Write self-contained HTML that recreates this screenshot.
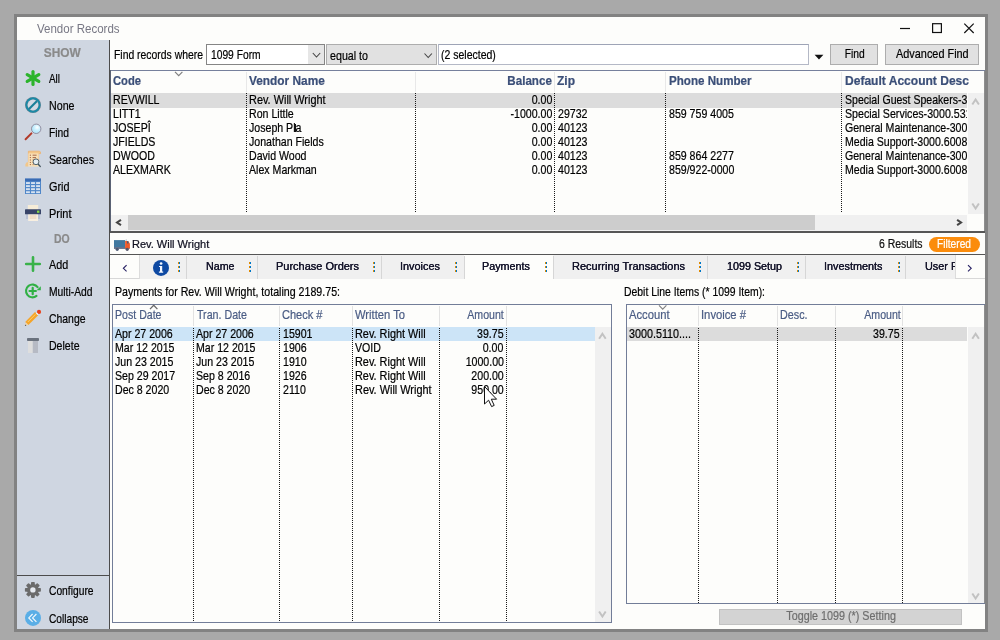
<!DOCTYPE html>
<html><head><meta charset="utf-8"><title>Vendor Records</title>
<style>
html,body{margin:0;padding:0}
body{width:1000px;height:640px;overflow:hidden;position:relative;background:#a9a9a9;font-family:"Liberation Sans",sans-serif;}
#w{position:absolute;left:0;top:0;width:1000px;height:640px;will-change:transform}
.b{position:absolute;display:block}
.t{position:absolute;white-space:nowrap;line-height:1;display:block;-webkit-text-stroke:0.22px currentColor}
.dv{background-image:linear-gradient(to bottom,#1a1a1a 50%,transparent 50%);background-size:1px 2px;}
</style></head><body><div id="w">
<div class="b" style="left:14px;top:14px;width:974px;height:618px;background:#828282;"></div>
<div class="b" style="left:17px;top:17px;width:968px;height:612px;background:#fdfdfb;"></div>
<span class="t" style="left:36.80px;transform-origin:0 0;top:22.00px;font-size:13px;color:#777784;transform:scaleX(0.8861);-webkit-text-stroke:0;">Vendor Records</span>
<svg class="b" style="left:895px;top:18px" width="85" height="20" viewBox="0 0 85 20"><path d="M5 10.5 H15" stroke="#111" stroke-width="1.2"/><rect x="37.6" y="5.7" width="8.8" height="8.8" fill="none" stroke="#111" stroke-width="1.2"/><path d="M69.3 5.6 L78.7 15 M78.7 5.6 L69.3 15" stroke="#111" stroke-width="1.2"/></svg>
<div class="b" style="left:17px;top:40px;width:92px;height:589px;background:#cfd6e1;"></div>
<div class="b" style="left:109px;top:40px;width:1px;height:589px;background:#4c4c4c;"></div>
<div class="b" style="left:17px;top:575px;width:92px;height:1px;background:#4c4c4c;"></div>
<span class="t" style="left:41.98px;transform-origin:50% 0;top:46.00px;font-size:13px;font-weight:700;color:#8a8a8a;transform:scaleX(0.9149);">SHOW</span>
<span class="t" style="left:52.05px;transform-origin:50% 0;top:232.00px;font-size:13px;font-weight:700;color:#8a8a8a;transform:scaleX(0.8051);">DO</span>
<span class="t" style="left:48.60px;transform-origin:0 0;top:72.00px;font-size:13px;color:#000;transform:scaleX(0.7613);">All</span>
<span class="t" style="left:48.60px;transform-origin:0 0;top:99.00px;font-size:13px;color:#000;transform:scaleX(0.8206);">None</span>
<span class="t" style="left:48.60px;transform-origin:0 0;top:126.00px;font-size:13px;color:#000;transform:scaleX(0.7909);">Find</span>
<span class="t" style="left:48.60px;transform-origin:0 0;top:153.00px;font-size:13px;color:#000;transform:scaleX(0.8194);">Searches</span>
<span class="t" style="left:48.60px;transform-origin:0 0;top:180.00px;font-size:13px;color:#000;transform:scaleX(0.8348);">Grid</span>
<span class="t" style="left:48.60px;transform-origin:0 0;top:207.00px;font-size:13px;color:#000;transform:scaleX(0.8418);">Print</span>
<span class="t" style="left:48.60px;transform-origin:0 0;top:258.00px;font-size:13px;color:#000;transform:scaleX(0.8301);">Add</span>
<span class="t" style="left:48.60px;transform-origin:0 0;top:285.00px;font-size:13px;color:#000;transform:scaleX(0.7923);">Multi-Add</span>
<span class="t" style="left:48.60px;transform-origin:0 0;top:312.00px;font-size:13px;color:#000;transform:scaleX(0.8016);">Change</span>
<span class="t" style="left:48.60px;transform-origin:0 0;top:339.00px;font-size:13px;color:#000;transform:scaleX(0.8117);">Delete</span>
<span class="t" style="left:48.60px;transform-origin:0 0;top:584.00px;font-size:13px;color:#000;transform:scaleX(0.7895);">Configure</span>
<span class="t" style="left:48.60px;transform-origin:0 0;top:612.00px;font-size:13px;color:#000;transform:scaleX(0.7809);">Collapse</span>
<svg class="b" style="left:24px;top:69px" width="18" height="18" viewBox="0 0 18 18"><g stroke="#2cb42c" stroke-width="3.2" stroke-linecap="round"><path d="M9 2.6 V15.4"/><path d="M3.2 5.6 L14.8 12.4"/><path d="M14.8 5.6 L3.2 12.4"/></g></svg>
<svg class="b" style="left:24px;top:96px" width="18" height="18" viewBox="0 0 18 18"><circle cx="9" cy="9" r="8" fill="#8f8a94"/><circle cx="9" cy="9" r="6.6" fill="none" stroke="#1b8aa6" stroke-width="2.1"/><circle cx="9" cy="9" r="5.4" fill="#d3dae4"/><path d="M5 13 L13 5" stroke="#1b7f98" stroke-width="2.2"/></svg>
<svg class="b" style="left:24px;top:121px" width="18" height="20" viewBox="0 0 18 20"><defs><radialGradient id="lg" cx="0.6" cy="0.35" r="0.7"><stop offset="0" stop-color="#ffffff"/><stop offset="0.5" stop-color="#c4efff"/><stop offset="1" stop-color="#a8e0f6"/></radialGradient></defs><path d="M1.6 18.2 L7.4 12.4" stroke="#b23a2a" stroke-width="2" stroke-linecap="round"/><circle cx="12.2" cy="7.8" r="4.7" fill="url(#lg)" stroke="#8d8596" stroke-width="0.9"/></svg>
<svg class="b" style="left:24px;top:150px" width="18" height="18" viewBox="0 0 18 18"><path d="M4.4 1.2 H15.2 Q16.8 1.2 16.6 3.6 H14.6 V12 H4.4 Z" fill="#f4c788" stroke="#eeb270" stroke-width="0.8"/><path d="M4.4 12 V16.6 H1.4 Q0.8 14 2.4 12.4 Z" fill="#f2c78a"/><rect x="4.4" y="3.4" width="10.2" height="13.2" fill="#f8e0b6"/><path d="M5.8 5.2 H7 M8.6 5.2 H12.6 M5.8 7.6 H7 M8.6 7.6 H12 M5.8 10 H7 M8.6 10 H10 M5.8 12.4 H7 M8.6 12.4 H9.4 M5.8 14.6 H7 M8.6 14.6 H9.6" stroke="#a86848" stroke-width="1"/><path d="M14 14 L16.2 16.4" stroke="#40525a" stroke-width="1.4" stroke-linecap="round"/><circle cx="12" cy="11.8" r="2.9" fill="#e4eef4" stroke="#4c5e66" stroke-width="0.95"/></svg>
<svg class="b" style="left:24px;top:177px" width="18" height="18" viewBox="0 0 18 18"><rect x="1" y="1.6" width="16" height="15.4" fill="#4f86c8"/><rect x="1" y="1.6" width="16" height="2.6" fill="#3a6cb4"/><rect x="2.00" y="5.10" width="3.9" height="1.9" fill="#d6e2f0"/><rect x="7.05" y="5.10" width="3.9" height="1.9" fill="#d6e2f0"/><rect x="12.10" y="5.10" width="3.9" height="1.9" fill="#d6e2f0"/><rect x="2.00" y="8.15" width="3.9" height="1.9" fill="#d6e2f0"/><rect x="7.05" y="8.15" width="3.9" height="1.9" fill="#d6e2f0"/><rect x="12.10" y="8.15" width="3.9" height="1.9" fill="#d6e2f0"/><rect x="2.00" y="11.20" width="3.9" height="1.9" fill="#d6e2f0"/><rect x="7.05" y="11.20" width="3.9" height="1.9" fill="#d6e2f0"/><rect x="12.10" y="11.20" width="3.9" height="1.9" fill="#d6e2f0"/><rect x="2.00" y="14.25" width="3.9" height="1.9" fill="#d6e2f0"/><rect x="7.05" y="14.25" width="3.9" height="1.9" fill="#d6e2f0"/><rect x="12.10" y="14.25" width="3.9" height="1.9" fill="#d6e2f0"/></svg>
<svg class="b" style="left:24px;top:203px" width="18" height="20" viewBox="0 0 18 20"><rect x="3.8" y="2" width="10.4" height="5" fill="#f6ecd8"/><rect x="2" y="11" width="2.4" height="5" fill="#b8c0d4"/><rect x="13.8" y="11" width="2.4" height="5" fill="#b8c0d4"/><rect x="4.2" y="11" width="9.8" height="7" fill="#f8efe0"/><path d="M5.6 13 H12.4 M5.6 15 H12.4" stroke="#e8c8a8" stroke-width="0.9"/><rect x="1" y="6.3" width="16" height="5" rx="0.6" fill="#384468"/><rect x="13" y="7.6" width="2.4" height="2.2" fill="#86d848"/></svg>
<svg class="b" style="left:24px;top:255px" width="18" height="18" viewBox="0 0 18 18"><path d="M2.2 9 H15.8 M9 2.3 V15.7" stroke="#3ab24a" stroke-width="2.6" stroke-linecap="round"/></svg>
<svg class="b" style="left:24px;top:282px" width="18" height="18" viewBox="0 0 18 18"><path d="M12.5 13.9 A6.4 6.4 0 1 1 13.6 5.2" fill="none" stroke="#30b044" stroke-width="2.1" stroke-linecap="round"/><path d="M16.8 4.2 V8.2 H12.6 Z" fill="#30b044"/><path d="M5.5 9 H11.9 M8.7 5.8 V12.2" stroke="#30b044" stroke-width="2.2" stroke-linecap="round"/></svg>
<svg class="b" style="left:24px;top:309px" width="18" height="18" viewBox="0 0 18 18"><path d="M1.6 14.2 L11.4 4.2 L14.6 7.4 L4.8 17.2 Z" fill="#f5a52a" transform="translate(-0.4,-1.2)"/><path d="M3.8 13 L11.4 5.4" stroke="#fbd070" stroke-width="1"/><path d="M0.9 16.9 L2 13.6 L4.2 15.8 Z" fill="#f2d2a0"/><path d="M0.9 16.9 L1.4 15.5 L2.4 16.4 Z" fill="#303848"/><circle cx="15" cy="2.9" r="2.1" fill="#e8421c"/><path d="M12.4 4 L14 5.6" stroke="#f4f4f4" stroke-width="1.3"/></svg>
<svg class="b" style="left:24px;top:336px" width="18" height="18" viewBox="0 0 18 18"><rect x="4" y="4.6" width="4.8" height="12.4" fill="#dedede"/><rect x="8.8" y="4.6" width="5.2" height="12.4" fill="#b6bac4"/><rect x="3" y="2" width="12" height="3" rx="0.8" fill="#6a727e"/></svg>
<svg class="b" style="left:24px;top:581px" width="18" height="18" viewBox="0 0 18 18"><g transform="translate(8.9,8.9)" fill="#6b6b6b"><rect x="-1.9" y="-8" width="3.8" height="4" rx="0.8" transform="rotate(0)"/><rect x="-1.9" y="-8" width="3.8" height="4" rx="0.8" transform="rotate(45)"/><rect x="-1.9" y="-8" width="3.8" height="4" rx="0.8" transform="rotate(90)"/><rect x="-1.9" y="-8" width="3.8" height="4" rx="0.8" transform="rotate(135)"/><rect x="-1.9" y="-8" width="3.8" height="4" rx="0.8" transform="rotate(180)"/><rect x="-1.9" y="-8" width="3.8" height="4" rx="0.8" transform="rotate(225)"/><rect x="-1.9" y="-8" width="3.8" height="4" rx="0.8" transform="rotate(270)"/><rect x="-1.9" y="-8" width="3.8" height="4" rx="0.8" transform="rotate(315)"/><circle r="5.9"/></g><circle cx="8.9" cy="8.9" r="2.7" fill="#e6eaf0"/></svg>
<svg class="b" style="left:24px;top:609px" width="18" height="18" viewBox="0 0 18 18"><circle cx="9" cy="8.9" r="8" fill="#5aaee6"/><path d="M8.6 5 L4.8 8.9 L8.6 12.8 M12.4 5 L8.6 8.9 L12.4 12.8" fill="none" stroke="#f2f8fc" stroke-width="1.2"/></svg>
<span class="t" style="left:114.20px;transform-origin:0 0;top:48.00px;font-size:13px;color:#000;transform:scaleX(0.7999);">Find records where</span>
<div class="b" style="left:206px;top:44px;width:119px;height:21px;background:#fff;border:1px solid #858585;box-sizing:border-box;"></div>
<div class="b" style="left:308px;top:45px;width:16px;height:19px;background:#e6e6e6;"></div>
<span class="t" style="left:211.10px;transform-origin:0 0;top:48.00px;font-size:13px;color:#000;transform:scaleX(0.7891);">1099 Form</span>
<svg class="b" style="left:0;top:0" width="1000" height="640"><path d="M312.8 53 L316.5 57 L320.2 53" fill="none" stroke="#444" stroke-width="1.1"/></svg>
<div class="b" style="left:326px;top:44px;width:111px;height:21px;background:#e1e1e1;border:1px solid #adadad;box-sizing:border-box;"></div>
<span class="t" style="left:330.40px;transform-origin:0 0;top:48.60px;font-size:13px;color:#000;transform:scaleX(0.8215);">equal to</span>
<svg class="b" style="left:0;top:0" width="1000" height="640"><path d="M424.5 53.5 L428.2 57.5 L431.9 53.5" fill="none" stroke="#444" stroke-width="1.1"/></svg>
<div class="b" style="left:438px;top:44px;width:371px;height:21px;background:#fff;border:1px solid #b4b8c6;border-top-color:#9ea4b6;box-sizing:border-box;"></div>
<span class="t" style="left:441.40px;transform-origin:0 0;top:48.30px;font-size:13px;color:#000;transform:scaleX(0.8069);">(2 selected)</span>
<svg class="b" style="left:814px;top:54px" width="10" height="6" viewBox="0 0 10 6"><path d="M0.6 0.8 H9.4 L5 5.6 Z" fill="#111"/></svg>
<div class="b" style="left:830px;top:44px;width:48px;height:21px;background:#e1e1e1;border:1px solid #adadad;box-sizing:border-box;"></div>
<span class="t" style="left:841.76px;transform-origin:50% 0;top:47.00px;font-size:13px;color:#000;transform:scaleX(0.7909);">Find</span>
<div class="b" style="left:885px;top:44px;width:94px;height:21px;background:#e1e1e1;border:1px solid #adadad;box-sizing:border-box;"></div>
<span class="t" style="left:888.84px;transform-origin:50% 0;top:47.00px;font-size:13px;color:#000;transform:scaleX(0.8372);">Advanced Find</span>
<div class="b" style="left:110px;top:70px;width:875px;height:1px;background:#76809c;"></div>
<div class="b" style="left:110px;top:70px;width:1px;height:162px;background:#5a6274;"></div>
<div class="b" style="left:246px;top:72px;width:1px;height:20px;background:#e8e8e8;"></div>
<div class="b" style="left:415px;top:72px;width:1px;height:20px;background:#e8e8e8;"></div>
<div class="b" style="left:554px;top:72px;width:1px;height:20px;background:#e8e8e8;"></div>
<div class="b" style="left:665px;top:72px;width:1px;height:20px;background:#e8e8e8;"></div>
<div class="b" style="left:841px;top:72px;width:1px;height:20px;background:#e8e8e8;"></div>
<span class="t" style="left:112.90px;transform-origin:0 0;top:74.00px;font-size:13px;font-weight:700;color:#3b4f78;transform:scaleX(0.8616);">Code</span>
<span class="t" style="left:248.80px;transform-origin:0 0;top:74.00px;font-size:13px;font-weight:700;color:#3b4f78;transform:scaleX(0.9123);">Vendor Name</span>
<span class="t" style="left:502.14px;transform-origin:100% 0;top:74.00px;font-size:13px;font-weight:700;color:#3b4f78;transform:scaleX(0.8926);">Balance</span>
<span class="t" style="left:556.80px;transform-origin:0 0;top:74.00px;font-size:13px;font-weight:700;color:#3b4f78;transform:scaleX(0.9235);">Zip</span>
<span class="t" style="left:668.80px;transform-origin:0 0;top:74.00px;font-size:13px;font-weight:700;color:#3b4f78;transform:scaleX(0.8924);">Phone Number</span>
<span class="t" style="left:844.80px;transform-origin:0 0;top:74.00px;font-size:13px;font-weight:700;color:#3b4f78;transform:scaleX(0.9263);">Default Account Desc</span>
<svg class="b" style="left:0;top:0" width="1000" height="640"><path d="M175.0 71.8 L178.7 75.60000000000001 L182.39999999999998 71.8" fill="none" stroke="#808080" stroke-width="1.2"/></svg>
<div class="b" style="left:111px;top:93px;width:856px;height:15px;background:#dcdcdc;"></div>
<span class="t" style="left:112.90px;transform-origin:0 0;top:93.00px;font-size:13px;color:#000;transform:scaleX(0.8150);">REVWILL</span>
<span class="t" style="left:249.30px;transform-origin:0 0;top:93.00px;font-size:13px;color:#000;transform:scaleX(0.8395);">Rev. Will Wright</span>
<span class="t" style="left:526.70px;transform-origin:100% 0;top:93.00px;font-size:13px;color:#000;transform:scaleX(0.8150);">0.00</span>
<div class="b" style="left:842px;top:93px;width:125px;height:14px;overflow:hidden">
<span class="t" style="left:3.20px;transform-origin:0 0;top:-0.00px;font-size:13px;color:#000;transform:scaleX(0.8099);">Special Guest Speakers-3</span>
</div>
<span class="t" style="left:112.90px;transform-origin:0 0;top:107.00px;font-size:13px;color:#000;transform:scaleX(0.8150);">LITT1</span>
<span class="t" style="left:249.30px;transform-origin:0 0;top:107.00px;font-size:13px;color:#000;transform:scaleX(0.8150);">Ron Little</span>
<span class="t" style="left:500.68px;transform-origin:100% 0;top:107.00px;font-size:13px;color:#000;transform:scaleX(0.8150);">-1000.00</span>
<span class="t" style="left:557.80px;transform-origin:0 0;top:107.00px;font-size:13px;color:#000;transform:scaleX(0.8150);">29732</span>
<span class="t" style="left:668.80px;transform-origin:0 0;top:107.00px;font-size:13px;color:#000;transform:scaleX(0.8150);">859 759 4005</span>
<div class="b" style="left:842px;top:107px;width:125px;height:14px;overflow:hidden">
<span class="t" style="left:3.20px;transform-origin:0 0;top:-0.00px;font-size:13px;color:#000;transform:scaleX(0.8181);">Special Services-3000.531</span>
</div>
<span class="t" style="left:112.90px;transform-origin:0 0;top:121.00px;font-size:13px;color:#000;transform:scaleX(0.8150);">JOSEPÎ</span>
<span class="t" style="left:249.30px;transform-origin:0 0;top:121.00px;font-size:13px;color:#000;transform:scaleX(0.8150);">Joseph Pla</span>
<span class="t" style="left:526.70px;transform-origin:100% 0;top:121.00px;font-size:13px;color:#000;transform:scaleX(0.8150);">0.00</span>
<span class="t" style="left:557.80px;transform-origin:0 0;top:121.00px;font-size:13px;color:#000;transform:scaleX(0.8150);">40123</span>
<div class="b" style="left:842px;top:121px;width:125px;height:14px;overflow:hidden">
<span class="t" style="left:3.20px;transform-origin:0 0;top:-0.00px;font-size:13px;color:#000;transform:scaleX(0.8137);">General Maintenance-300</span>
</div>
<span class="t" style="left:112.90px;transform-origin:0 0;top:135.00px;font-size:13px;color:#000;transform:scaleX(0.8150);">JFIELDS</span>
<span class="t" style="left:249.30px;transform-origin:0 0;top:135.00px;font-size:13px;color:#000;transform:scaleX(0.8150);">Jonathan Fields</span>
<span class="t" style="left:526.70px;transform-origin:100% 0;top:135.00px;font-size:13px;color:#000;transform:scaleX(0.8150);">0.00</span>
<span class="t" style="left:557.80px;transform-origin:0 0;top:135.00px;font-size:13px;color:#000;transform:scaleX(0.8150);">40123</span>
<div class="b" style="left:842px;top:135px;width:125px;height:14px;overflow:hidden">
<span class="t" style="left:3.20px;transform-origin:0 0;top:-0.00px;font-size:13px;color:#000;transform:scaleX(0.8136);">Media Support-3000.6008</span>
</div>
<span class="t" style="left:112.90px;transform-origin:0 0;top:149.00px;font-size:13px;color:#000;transform:scaleX(0.8150);">DWOOD</span>
<span class="t" style="left:249.30px;transform-origin:0 0;top:149.00px;font-size:13px;color:#000;transform:scaleX(0.8150);">David Wood</span>
<span class="t" style="left:526.70px;transform-origin:100% 0;top:149.00px;font-size:13px;color:#000;transform:scaleX(0.8150);">0.00</span>
<span class="t" style="left:557.80px;transform-origin:0 0;top:149.00px;font-size:13px;color:#000;transform:scaleX(0.8150);">40123</span>
<span class="t" style="left:668.80px;transform-origin:0 0;top:149.00px;font-size:13px;color:#000;transform:scaleX(0.8150);">859 864 2277</span>
<div class="b" style="left:842px;top:149px;width:125px;height:14px;overflow:hidden">
<span class="t" style="left:3.20px;transform-origin:0 0;top:-0.00px;font-size:13px;color:#000;transform:scaleX(0.8137);">General Maintenance-300</span>
</div>
<span class="t" style="left:112.90px;transform-origin:0 0;top:163.00px;font-size:13px;color:#000;transform:scaleX(0.8150);">ALEXMARK</span>
<span class="t" style="left:249.30px;transform-origin:0 0;top:163.00px;font-size:13px;color:#000;transform:scaleX(0.8150);">Alex Markman</span>
<span class="t" style="left:526.70px;transform-origin:100% 0;top:163.00px;font-size:13px;color:#000;transform:scaleX(0.8150);">0.00</span>
<span class="t" style="left:557.80px;transform-origin:0 0;top:163.00px;font-size:13px;color:#000;transform:scaleX(0.8150);">40123</span>
<span class="t" style="left:668.80px;transform-origin:0 0;top:163.00px;font-size:13px;color:#000;transform:scaleX(0.8150);">859/922-0000</span>
<div class="b" style="left:842px;top:163px;width:125px;height:14px;overflow:hidden">
<span class="t" style="left:3.20px;transform-origin:0 0;top:-0.00px;font-size:13px;color:#000;transform:scaleX(0.8136);">Media Support-3000.6008</span>
</div>
<div class="b" style="left:294px;top:124px;width:2px;height:8px;background:#111;"></div>
<div class="b dv" style="left:246px;top:93px;width:1px;height:120px;"></div>
<div class="b dv" style="left:415px;top:93px;width:1px;height:120px;"></div>
<div class="b dv" style="left:554px;top:93px;width:1px;height:120px;"></div>
<div class="b dv" style="left:665px;top:93px;width:1px;height:120px;"></div>
<div class="b dv" style="left:841px;top:93px;width:1px;height:120px;"></div>
<div class="b" style="left:968px;top:93px;width:16px;height:121px;background:#f0f0f0;"></div>
<svg class="b" style="left:0;top:0" width="1000" height="640"><path d="M972.3000000000001 104.5 L975.6 99.5 L978.9 104.5" fill="none" stroke="#c2c2c2" stroke-width="2"/></svg>
<svg class="b" style="left:0;top:0" width="1000" height="640"><path d="M972.3000000000001 203.5 L975.6 208.5 L978.9 203.5" fill="none" stroke="#c2c2c2" stroke-width="2"/></svg>
<div class="b" style="left:984px;top:71px;width:1px;height:160px;background:#8e8e8e;"></div>
<div class="b" style="left:111px;top:215px;width:856px;height:16px;background:#f0f0f0;"></div>
<div class="b" style="left:128px;top:215px;width:687px;height:15px;background:#cdcdcd;"></div>
<svg class="b" style="left:0;top:0" width="1000" height="640"><path d="M121 219.8 L117 222.5 L121 225.2" fill="none" stroke="#444" stroke-width="2"/></svg>
<svg class="b" style="left:0;top:0" width="1000" height="640"><path d="M957.1 219.8 L961.1 222.5 L957.1 225.2" fill="none" stroke="#444" stroke-width="2"/></svg>
<div class="b" style="left:967px;top:214px;width:17px;height:17px;background:#fdfdfb;"></div>
<div class="b" style="left:110px;top:231px;width:875px;height:2px;background:#565656;"></div>
<svg class="b" style="left:113px;top:239px" width="18" height="13" viewBox="0 0 18 13"><rect x="1" y="1.1" width="11.2" height="7.2" fill="#41789f"/><rect x="1" y="8.2" width="15.6" height="1.6" fill="#4c5a78"/><path d="M12.1 1.9 H15 L16.9 4.6 V9.4 H12.1 Z" fill="#ef5a2a"/><rect x="14" y="2.2" width="1.5" height="2.3" fill="#4a5a78"/><rect x="12.8" y="0.3" width="0.8" height="1.6" fill="#b0b8c0"/><circle cx="4.2" cy="10.3" r="1.6" fill="#4e5a74"/><circle cx="14.2" cy="10.3" r="1.6" fill="#56566a"/></svg>
<span class="t" style="left:132.00px;transform-origin:0 0;top:238.59px;font-size:11px;color:#101020;transform:scaleX(0.9999);">Rev. Will Wright</span>
<span class="t" style="left:879.30px;transform-origin:0 0;top:237.84px;font-size:12px;color:#111;transform:scaleX(0.8697);">6 Results</span>
<div class="b" style="left:929px;top:237px;width:51px;height:15px;background:#fb8c0c;border-radius:8px;"></div>
<span class="t" style="left:934.49px;transform-origin:50% 0;top:237.84px;font-size:12px;color:#fff;transform:scaleX(0.8498);">Filtered</span>
<div class="b" style="left:110px;top:254px;width:875px;height:1px;background:#555;"></div>
<div class="b" style="left:110px;top:255px;width:875px;height:24px;background:#f0f0f0;"></div>
<div class="b" style="left:110px;top:255px;width:30px;height:24px;background:#fdfdfb;"></div>
<div class="b" style="left:464px;top:255px;width:89px;height:25px;background:#fdfdfb;"></div>
<div class="b" style="left:186px;top:256px;width:1px;height:23px;background:#d6d6d6;"></div>
<div class="b" style="left:257px;top:256px;width:1px;height:23px;background:#d6d6d6;"></div>
<div class="b" style="left:381px;top:256px;width:1px;height:23px;background:#d6d6d6;"></div>
<div class="b" style="left:464px;top:256px;width:1px;height:23px;background:#d6d6d6;"></div>
<div class="b" style="left:553px;top:256px;width:1px;height:23px;background:#d6d6d6;"></div>
<div class="b" style="left:707px;top:256px;width:1px;height:23px;background:#d6d6d6;"></div>
<div class="b" style="left:805px;top:256px;width:1px;height:23px;background:#d6d6d6;"></div>
<div class="b" style="left:905px;top:256px;width:1px;height:23px;background:#d6d6d6;"></div>
<span class="t" style="left:205.90px;transform-origin:0 0;top:261.19px;font-size:11px;color:#16162c;transform:scaleX(0.9713);text-shadow:0 0 0.25px #16162c;">Name</span>
<span class="t" style="left:276.40px;transform-origin:0 0;top:261.19px;font-size:11px;color:#16162c;transform:scaleX(0.9983);text-shadow:0 0 0.25px #16162c;">Purchase Orders</span>
<span class="t" style="left:400.40px;transform-origin:0 0;top:261.19px;font-size:11px;color:#16162c;transform:scaleX(0.9913);text-shadow:0 0 0.25px #16162c;">Invoices</span>
<span class="t" style="left:482.40px;transform-origin:0 0;top:261.19px;font-size:11px;color:#16162c;transform:scaleX(0.9815);text-shadow:0 0 0.25px #16162c;">Payments</span>
<span class="t" style="left:572.40px;transform-origin:0 0;top:261.19px;font-size:11px;color:#16162c;transform:scaleX(0.9991);text-shadow:0 0 0.25px #16162c;">Recurring Transactions</span>
<span class="t" style="left:727.40px;transform-origin:0 0;top:261.19px;font-size:11px;color:#16162c;transform:scaleX(0.9775);text-shadow:0 0 0.25px #16162c;">1099 Setup</span>
<span class="t" style="left:824.40px;transform-origin:0 0;top:261.19px;font-size:11px;color:#16162c;transform:scaleX(0.9865);text-shadow:0 0 0.25px #16162c;">Investments</span>
<span class="t" style="left:924.90px;transform-origin:0 0;top:261.19px;font-size:11px;color:#16162c;transform:scaleX(0.9888);text-shadow:0 0 0.25px #16162c;">User Fields</span>
<div class="b" style="left:178px;top:262px;width:1px;height:2px;background:#e08a00;"></div>
<div class="b" style="left:179px;top:262px;width:1px;height:2px;background:#0078c8;"></div>
<div class="b" style="left:178px;top:266px;width:1px;height:2px;background:#e08a00;"></div>
<div class="b" style="left:179px;top:266px;width:1px;height:2px;background:#0078c8;"></div>
<div class="b" style="left:178px;top:270px;width:1px;height:2px;background:#e08a00;"></div>
<div class="b" style="left:179px;top:270px;width:1px;height:2px;background:#0078c8;"></div>
<div class="b" style="left:249px;top:262px;width:1px;height:2px;background:#e08a00;"></div>
<div class="b" style="left:250px;top:262px;width:1px;height:2px;background:#0078c8;"></div>
<div class="b" style="left:249px;top:266px;width:1px;height:2px;background:#e08a00;"></div>
<div class="b" style="left:250px;top:266px;width:1px;height:2px;background:#0078c8;"></div>
<div class="b" style="left:249px;top:270px;width:1px;height:2px;background:#e08a00;"></div>
<div class="b" style="left:250px;top:270px;width:1px;height:2px;background:#0078c8;"></div>
<div class="b" style="left:373px;top:262px;width:1px;height:2px;background:#e08a00;"></div>
<div class="b" style="left:374px;top:262px;width:1px;height:2px;background:#0078c8;"></div>
<div class="b" style="left:373px;top:266px;width:1px;height:2px;background:#e08a00;"></div>
<div class="b" style="left:374px;top:266px;width:1px;height:2px;background:#0078c8;"></div>
<div class="b" style="left:373px;top:270px;width:1px;height:2px;background:#e08a00;"></div>
<div class="b" style="left:374px;top:270px;width:1px;height:2px;background:#0078c8;"></div>
<div class="b" style="left:455px;top:262px;width:1px;height:2px;background:#e08a00;"></div>
<div class="b" style="left:456px;top:262px;width:1px;height:2px;background:#0078c8;"></div>
<div class="b" style="left:455px;top:266px;width:1px;height:2px;background:#e08a00;"></div>
<div class="b" style="left:456px;top:266px;width:1px;height:2px;background:#0078c8;"></div>
<div class="b" style="left:455px;top:270px;width:1px;height:2px;background:#e08a00;"></div>
<div class="b" style="left:456px;top:270px;width:1px;height:2px;background:#0078c8;"></div>
<div class="b" style="left:545px;top:262px;width:1px;height:2px;background:#e08a00;"></div>
<div class="b" style="left:546px;top:262px;width:1px;height:2px;background:#0078c8;"></div>
<div class="b" style="left:545px;top:266px;width:1px;height:2px;background:#e08a00;"></div>
<div class="b" style="left:546px;top:266px;width:1px;height:2px;background:#0078c8;"></div>
<div class="b" style="left:545px;top:270px;width:1px;height:2px;background:#e08a00;"></div>
<div class="b" style="left:546px;top:270px;width:1px;height:2px;background:#0078c8;"></div>
<div class="b" style="left:699px;top:262px;width:1px;height:2px;background:#e08a00;"></div>
<div class="b" style="left:700px;top:262px;width:1px;height:2px;background:#0078c8;"></div>
<div class="b" style="left:699px;top:266px;width:1px;height:2px;background:#e08a00;"></div>
<div class="b" style="left:700px;top:266px;width:1px;height:2px;background:#0078c8;"></div>
<div class="b" style="left:699px;top:270px;width:1px;height:2px;background:#e08a00;"></div>
<div class="b" style="left:700px;top:270px;width:1px;height:2px;background:#0078c8;"></div>
<div class="b" style="left:797px;top:262px;width:1px;height:2px;background:#e08a00;"></div>
<div class="b" style="left:798px;top:262px;width:1px;height:2px;background:#0078c8;"></div>
<div class="b" style="left:797px;top:266px;width:1px;height:2px;background:#e08a00;"></div>
<div class="b" style="left:798px;top:266px;width:1px;height:2px;background:#0078c8;"></div>
<div class="b" style="left:797px;top:270px;width:1px;height:2px;background:#e08a00;"></div>
<div class="b" style="left:798px;top:270px;width:1px;height:2px;background:#0078c8;"></div>
<div class="b" style="left:898px;top:262px;width:1px;height:2px;background:#e08a00;"></div>
<div class="b" style="left:899px;top:262px;width:1px;height:2px;background:#0078c8;"></div>
<div class="b" style="left:898px;top:266px;width:1px;height:2px;background:#e08a00;"></div>
<div class="b" style="left:899px;top:266px;width:1px;height:2px;background:#0078c8;"></div>
<div class="b" style="left:898px;top:270px;width:1px;height:2px;background:#e08a00;"></div>
<div class="b" style="left:899px;top:270px;width:1px;height:2px;background:#0078c8;"></div>
<div class="b" style="left:955px;top:255px;width:30px;height:24px;background:#fdfdfb;"></div>
<div class="b" style="left:955px;top:255px;width:1px;height:24px;background:#dcdcdc;"></div>
<div class="b" style="left:955px;top:278px;width:30px;height:1px;background:#d8d8d8;"></div>
<div class="b" style="left:110px;top:278px;width:30px;height:1px;background:#d8d8d8;"></div>
<div class="b" style="left:139px;top:255px;width:1px;height:24px;background:#dcdcdc;"></div>
<svg class="b" style="left:0;top:0" width="1000" height="640"><path d="M126.6 265.2 L123.4 268.3 L126.6 271.40000000000003" fill="none" stroke="#2a2466" stroke-width="1.15"/></svg>
<svg class="b" style="left:0;top:0" width="1000" height="640"><path d="M968.0 265.2 L971.2 268.3 L968.0 271.40000000000003" fill="none" stroke="#2a2466" stroke-width="1.15"/></svg>
<svg class="b" style="left:152px;top:259px" width="18" height="18" viewBox="0 0 18 18"><circle cx="9" cy="8.9" r="8" fill="#0e49a2"/><circle cx="9.1" cy="4.5" r="1.35" fill="#f4f8ff"/><path d="M7 6.9 H10.2 V12.6 H11.2 V13.8 H6.9 V12.6 H8 V8.1 H7 Z" fill="#f4f8ff"/></svg>
<span class="t" style="left:115.30px;transform-origin:0 0;top:285.00px;font-size:13px;color:#000;transform:scaleX(0.8188);">Payments for Rev. Will Wright, totaling 2189.75:</span>
<div class="b" style="left:112px;top:304px;width:500px;height:319px;background:#fdfdfb;border:1px solid #727d98;box-sizing:border-box;"></div>
<div class="b" style="left:193px;top:306px;width:1px;height:20px;background:#e2e2e2;"></div>
<div class="b" style="left:279px;top:306px;width:1px;height:20px;background:#e2e2e2;"></div>
<div class="b" style="left:352px;top:306px;width:1px;height:20px;background:#e2e2e2;"></div>
<div class="b" style="left:439px;top:306px;width:1px;height:20px;background:#e2e2e2;"></div>
<div class="b" style="left:506px;top:306px;width:1px;height:20px;background:#e2e2e2;"></div>
<span class="t" style="left:115.30px;transform-origin:0 0;top:308.00px;font-size:13px;color:#4a5c84;transform:scaleX(0.8146);">Post Date</span>
<span class="t" style="left:196.80px;transform-origin:0 0;top:308.00px;font-size:13px;color:#4a5c84;transform:scaleX(0.8206);">Tran. Date</span>
<span class="t" style="left:282.30px;transform-origin:0 0;top:308.00px;font-size:13px;color:#4a5c84;transform:scaleX(0.8493);">Check #</span>
<span class="t" style="left:354.90px;transform-origin:0 0;top:308.00px;font-size:13px;color:#4a5c84;transform:scaleX(0.8615);">Written To</span>
<span class="t" style="left:459.20px;transform-origin:100% 0;top:308.00px;font-size:13px;color:#4a5c84;transform:scaleX(0.8147);">Amount</span>
<svg class="b" style="left:0;top:0" width="1000" height="640"><path d="M150.0 309.09999999999997 L153.7 305.3 L157.39999999999998 309.09999999999997" fill="none" stroke="#6a6a6a" stroke-width="1.3"/></svg>
<div class="b" style="left:113px;top:327px;width:482px;height:14px;background:#cce4f7;"></div>
<span class="t" style="left:115.20px;transform-origin:0 0;top:327.00px;font-size:13px;color:#000;transform:scaleX(0.8150);">Apr 27 2006</span>
<span class="t" style="left:196.40px;transform-origin:0 0;top:327.00px;font-size:13px;color:#000;transform:scaleX(0.8150);">Apr 27 2006</span>
<span class="t" style="left:282.50px;transform-origin:0 0;top:327.00px;font-size:13px;color:#000;transform:scaleX(0.8150);">15901</span>
<span class="t" style="left:355.00px;transform-origin:0 0;top:327.00px;font-size:13px;color:#000;transform:scaleX(0.8378);">Rev. Right Will</span>
<span class="t" style="left:471.17px;transform-origin:100% 0;top:327.00px;font-size:13px;color:#000;transform:scaleX(0.8150);">39.75</span>
<span class="t" style="left:115.20px;transform-origin:0 0;top:341.00px;font-size:13px;color:#000;transform:scaleX(0.8150);">Mar 12 2015</span>
<span class="t" style="left:196.40px;transform-origin:0 0;top:341.00px;font-size:13px;color:#000;transform:scaleX(0.8150);">Mar 12 2015</span>
<span class="t" style="left:282.50px;transform-origin:0 0;top:341.00px;font-size:13px;color:#000;transform:scaleX(0.8150);">1906</span>
<span class="t" style="left:355.00px;transform-origin:0 0;top:341.00px;font-size:13px;color:#000;transform:scaleX(0.8150);">VOID</span>
<span class="t" style="left:478.40px;transform-origin:100% 0;top:341.00px;font-size:13px;color:#000;transform:scaleX(0.8150);">0.00</span>
<span class="t" style="left:115.20px;transform-origin:0 0;top:355.00px;font-size:13px;color:#000;transform:scaleX(0.8150);">Jun 23 2015</span>
<span class="t" style="left:196.40px;transform-origin:0 0;top:355.00px;font-size:13px;color:#000;transform:scaleX(0.8150);">Jun 23 2015</span>
<span class="t" style="left:282.50px;transform-origin:0 0;top:355.00px;font-size:13px;color:#000;transform:scaleX(0.8150);">1910</span>
<span class="t" style="left:355.00px;transform-origin:0 0;top:355.00px;font-size:13px;color:#000;transform:scaleX(0.8378);">Rev. Right Will</span>
<span class="t" style="left:456.71px;transform-origin:100% 0;top:355.00px;font-size:13px;color:#000;transform:scaleX(0.8150);">1000.00</span>
<span class="t" style="left:115.20px;transform-origin:0 0;top:369.00px;font-size:13px;color:#000;transform:scaleX(0.8150);">Sep 29 2017</span>
<span class="t" style="left:196.40px;transform-origin:0 0;top:369.00px;font-size:13px;color:#000;transform:scaleX(0.8150);">Sep 8 2016</span>
<span class="t" style="left:282.50px;transform-origin:0 0;top:369.00px;font-size:13px;color:#000;transform:scaleX(0.8150);">1926</span>
<span class="t" style="left:355.00px;transform-origin:0 0;top:369.00px;font-size:13px;color:#000;transform:scaleX(0.8378);">Rev. Right Will</span>
<span class="t" style="left:463.94px;transform-origin:100% 0;top:369.00px;font-size:13px;color:#000;transform:scaleX(0.8150);">200.00</span>
<span class="t" style="left:115.20px;transform-origin:0 0;top:383.00px;font-size:13px;color:#000;transform:scaleX(0.8150);">Dec 8 2020</span>
<span class="t" style="left:196.40px;transform-origin:0 0;top:383.00px;font-size:13px;color:#000;transform:scaleX(0.8150);">Dec 8 2020</span>
<span class="t" style="left:282.50px;transform-origin:0 0;top:383.00px;font-size:13px;color:#000;transform:scaleX(0.8150);">2110</span>
<span class="t" style="left:355.00px;transform-origin:0 0;top:383.00px;font-size:13px;color:#000;transform:scaleX(0.8395);">Rev. Will Wright</span>
<span class="t" style="left:463.94px;transform-origin:100% 0;top:383.00px;font-size:13px;color:#000;transform:scaleX(0.8150);">950.00</span>
<div class="b dv" style="left:193px;top:328px;width:1px;height:294px;"></div>
<div class="b dv" style="left:279px;top:328px;width:1px;height:294px;"></div>
<div class="b dv" style="left:352px;top:328px;width:1px;height:294px;"></div>
<div class="b dv" style="left:439px;top:328px;width:1px;height:294px;"></div>
<div class="b dv" style="left:506px;top:328px;width:1px;height:294px;"></div>
<div class="b" style="left:595px;top:327px;width:16px;height:295px;background:#f0f0f0;"></div>
<svg class="b" style="left:0;top:0" width="1000" height="640"><path d="M599.1 338.7 L602.4 333.7 L605.6999999999999 338.7" fill="none" stroke="#c2c2c2" stroke-width="2"/></svg>
<svg class="b" style="left:0;top:0" width="1000" height="640"><path d="M599.1 611.5 L602.4 616.5 L605.6999999999999 611.5" fill="none" stroke="#c2c2c2" stroke-width="2"/></svg>
<span class="t" style="left:624.30px;transform-origin:0 0;top:285.00px;font-size:13px;color:#000;transform:scaleX(0.7998);">Debit Line Items (* 1099 Item):</span>
<div class="b" style="left:626px;top:304px;width:359px;height:300px;background:#fdfdfb;border:1px solid #727d98;border-right:none;box-sizing:border-box;"></div>
<div class="b" style="left:698px;top:306px;width:1px;height:20px;background:#e2e2e2;"></div>
<div class="b" style="left:777px;top:306px;width:1px;height:20px;background:#e2e2e2;"></div>
<div class="b" style="left:835px;top:306px;width:1px;height:20px;background:#e2e2e2;"></div>
<div class="b" style="left:902px;top:306px;width:1px;height:20px;background:#e2e2e2;"></div>
<span class="t" style="left:628.80px;transform-origin:0 0;top:308.00px;font-size:13px;color:#4a5c84;transform:scaleX(0.8622);">Account</span>
<span class="t" style="left:700.80px;transform-origin:0 0;top:308.00px;font-size:13px;color:#4a5c84;transform:scaleX(0.8649);">Invoice #</span>
<span class="t" style="left:780.30px;transform-origin:0 0;top:308.00px;font-size:13px;color:#4a5c84;transform:scaleX(0.8276);">Desc.</span>
<span class="t" style="left:855.70px;transform-origin:100% 0;top:308.00px;font-size:13px;color:#4a5c84;transform:scaleX(0.8147);">Amount</span>
<svg class="b" style="left:0;top:0" width="1000" height="640"><path d="M659.0 305.40000000000003 L662.7 309.2 L666.4000000000001 305.40000000000003" fill="none" stroke="#808080" stroke-width="1.1"/></svg>
<div class="b" style="left:627px;top:327px;width:340px;height:14px;background:#dcdcdc;"></div>
<span class="t" style="left:629.30px;transform-origin:0 0;top:327.00px;font-size:13px;color:#000;transform:scaleX(0.8275);">3000.5110....</span>
<span class="t" style="left:867.17px;transform-origin:100% 0;top:327.00px;font-size:13px;color:#000;transform:scaleX(0.8150);">39.75</span>
<div class="b dv" style="left:698px;top:328px;width:1px;height:275px;"></div>
<div class="b dv" style="left:777px;top:328px;width:1px;height:275px;"></div>
<div class="b dv" style="left:835px;top:328px;width:1px;height:275px;"></div>
<div class="b dv" style="left:902px;top:328px;width:1px;height:275px;"></div>
<div class="b" style="left:968px;top:327px;width:16px;height:276px;background:#f0f0f0;"></div>
<svg class="b" style="left:0;top:0" width="1000" height="640"><path d="M972.3000000000001 338.7 L975.6 333.7 L978.9 338.7" fill="none" stroke="#c2c2c2" stroke-width="2"/></svg>
<svg class="b" style="left:0;top:0" width="1000" height="640"><path d="M972.3000000000001 593.5 L975.6 598.5 L978.9 593.5" fill="none" stroke="#c2c2c2" stroke-width="2"/></svg>
<div class="b" style="left:984px;top:305px;width:1px;height:298px;background:#8e8e8e;"></div>
<div class="b" style="left:719px;top:609px;width:243px;height:16px;background:#d3d3d3;border:1px solid #c2c2c2;box-sizing:border-box;"></div>
<span class="t" style="left:774.88px;transform-origin:50% 0;top:609.00px;font-size:13px;color:#6e6e6e;transform:scaleX(0.8280);">Toggle 1099 (*) Setting</span>
<svg class="b" style="left:483px;top:385px" width="16" height="24" viewBox="0 0 16 24"><path d="M1.5 1.5 V19 L5.6 15.2 L8.6 21.6 L11.2 20.4 L8.3 14.2 H13.6 Z" fill="#fff" stroke="#111" stroke-width="1" stroke-linejoin="miter"/></svg>
</div></body></html>
